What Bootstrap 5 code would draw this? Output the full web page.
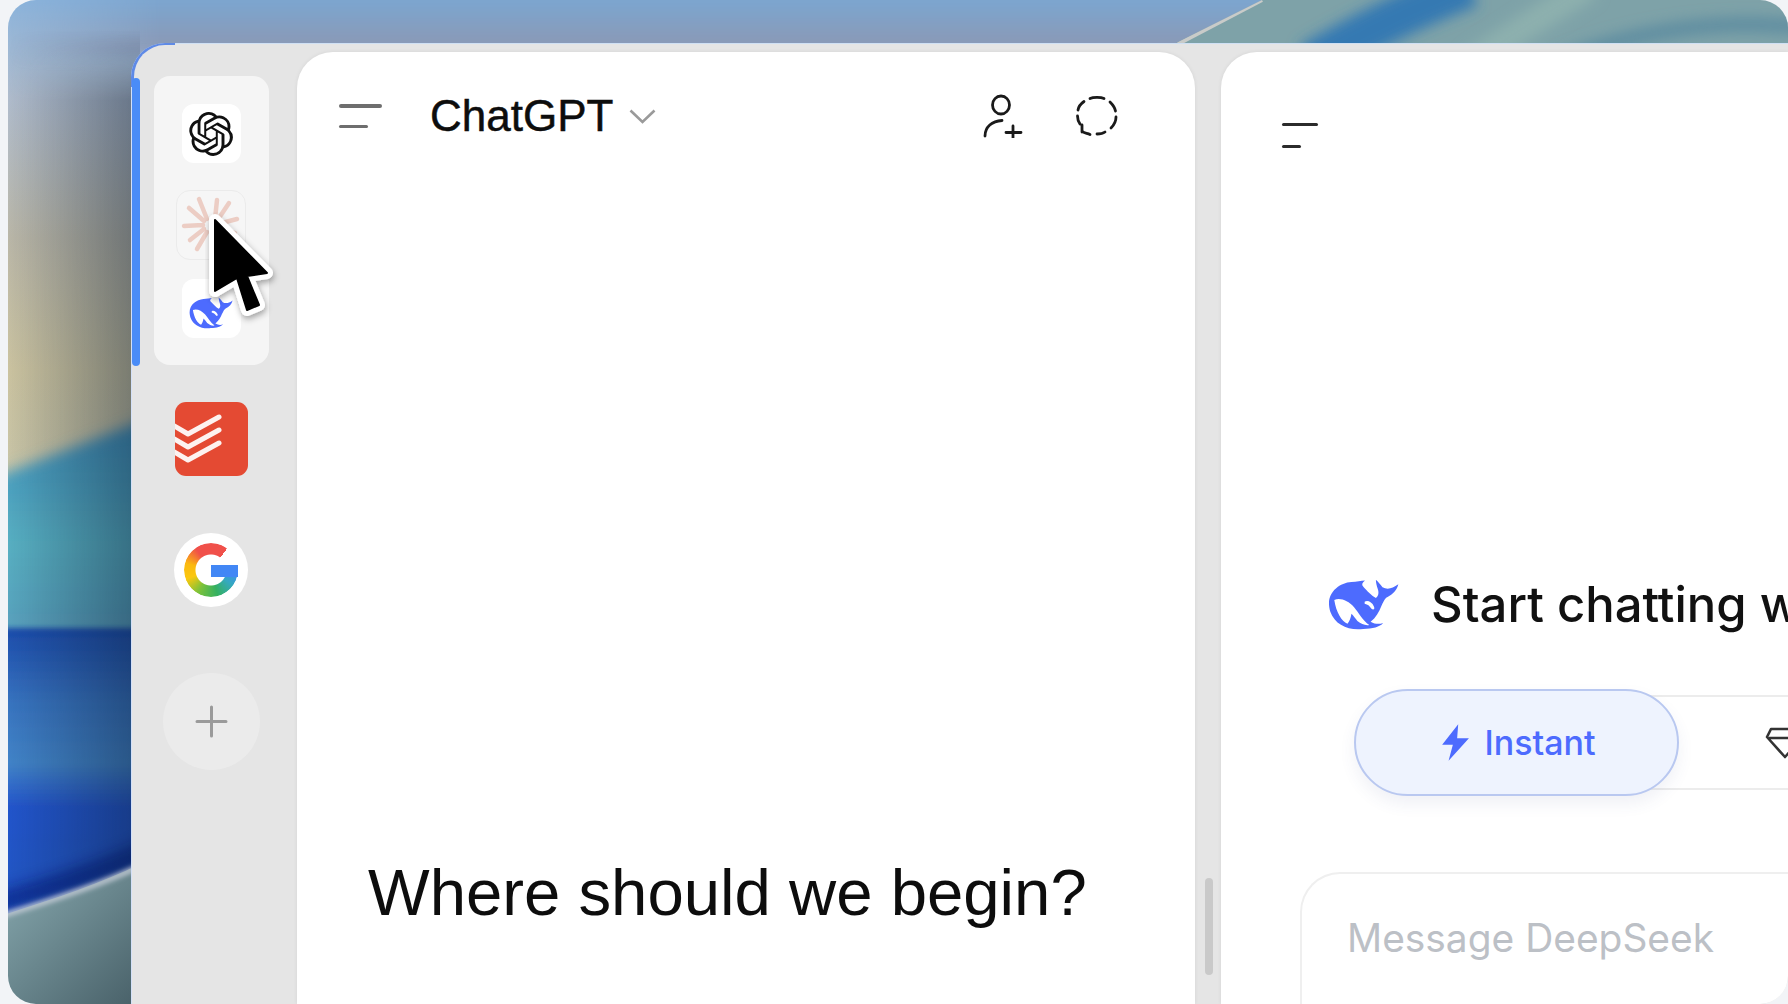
<!DOCTYPE html>
<html lang="en">
<head>
  <meta charset="UTF-8" />
  <meta name="viewport" content="width=device-width, initial-scale=1.0"/>
  <title>AI Sidebar</title>
  <link href="https://cdn.jsdelivr.net/npm/bootstrap@5.3.0/dist/css/bootstrap.min.css" rel="stylesheet">
  <style>
    html, body { height: 100%; margin: 0; overflow: hidden; background: #f2f4f7; }
    .desk { margin-left: 8px; height: 1004px; border-radius: 28px; overflow: hidden; padding: 43px 0 0 123px; }
    .wallpaper { left: 0; top: 0; width: 1780px; height: 1004px; }
    .app-win { height: 961px; background: #e5e5e5; border-top-left-radius: 34px; border-left: 1px solid #d3e0f8; border-top: 1px solid #cfe0f4; z-index: 1; }
    .corner-tint { left: -1px; top: -1px; width: 44px; height: 44px; border-top-left-radius: 34px; border-left: 3px solid #5f8ae6; border-top: 2px solid #5f8ae6; }
    .active-bar { left: 0; top: 34px; width: 8px; height: 288px; background: #4a8cf7; border-radius: 4px; }
    .rail { width: 165px; padding: 32px 7px 0 0; }
    .app-group { width: 115px; height: 289px; background: #f5f5f5; border-radius: 16px; padding-top: 28px; }
    .tile { width: 59px; height: 59px; background: #fff; border-radius: 12px; }
    .tile-claude { width: 70px; height: 70px; margin: 27px 0 19px; background: #f6f6f6; border: 1px solid #ebebeb; border-radius: 14px; }
    .tile-todo { width: 73px; height: 74px; margin-top: 37px; background: #e44a33; border-radius: 11px; overflow: hidden; }
    .tile-google { width: 74px; height: 74px; margin-top: 57px; background: #fff; }
    .g-wrap { width: 54px; height: 54px; }
    .g-ring { width: 54px; height: 54px; border-radius: 50%;
      background: conic-gradient(#f0504a 0deg, #f0504a 37deg, transparent 37deg, transparent 90deg, #4287f5 90deg, #35a9c0 125deg, #34b060 165deg, #7cc23a 210deg, #fbc80f 250deg, #fbb90f 285deg, #f0504a 325deg, #f0504a 360deg);
      -webkit-mask: radial-gradient(circle, transparent 15px, #000 16px);
      mask: radial-gradient(circle, transparent 15px, #000 16px); }
    .g-bar { left: 27px; top: 22px; width: 27px; height: 12px; background: #4287f5; }
    .add-btn { width: 97px; height: 97px; margin-top: 66px; background: #ebebeb; }
    .chat-pane { background: #fff; margin-top: 8px; box-shadow: 0 0 4px rgba(0, 0, 0, .07); overflow: hidden; }
    .pane-gpt { width: 898px; border-radius: 36px 36px 0 0; margin-right: 26px; padding: 39px 76px 0 42px; }
    .pane-ds { min-width: 0; flex: 1; border-top-left-radius: 36px; padding: 71px 0 0 61px; }
    .burger { display: flex; flex-direction: column; justify-content: space-between; }
    .burger i { display: block; border-radius: 2px; }
    .burger-gpt { width: 43px; height: 24px; }
    .burger-gpt i { height: 3.5px; background: #6e6e6e; width: 100%; }
    .burger-gpt i + i { width: 29px; }
    .burger-ds { width: 36px; height: 25px; }
    .burger-ds i { height: 3px; background: #2b2b2b; width: 100%; }
    .burger-ds i + i { width: 19px; }
    .model-name { font: 500 44px/50px "Liberation Sans", sans-serif; color: #0d0d0d; margin-left: 48px; -webkit-text-stroke: .5px #0d0d0d; }
    .greet { font: 400 65.3px/74px "Liberation Sans", sans-serif; color: #0d0d0d; margin: 0 0 74px 29px; white-space: nowrap; }
    .ds-title { font: 500 49px/56px Inter, sans-serif; color: #111; white-space: nowrap; margin-left: 32px; }
    .ds-head { margin: 429px 0 0 46px; }
    .mode-row { margin: 56px 0 0 72px; height: 107px; }
    .mode-on { width: 325px; height: 107px; background: #eef3fe; border: 2px solid #b9c8f0; border-radius: 54px; box-shadow: 0 8px 16px rgba(60, 80, 140, .08); color: #4d6bfe; font: 500 34px/1 Inter, sans-serif; gap: 14px; padding-left: 3px; flex: none; z-index: 1; }
    .mode-off { height: 95px; width: 400px; margin-left: -60px; padding-left: 146px; border-top: 2px solid #ececec; border-bottom: 2px solid #ececec; flex: none; }
    .composer { height: 200px; margin: 76px 0 0 18px; border: 2px solid #efefef; border-right: 0; border-radius: 40px 0 0 0; padding: 41px 0 0 45px; font: 400 38.9px/46px Inter, sans-serif; color: #bcc0c6; white-space: nowrap; }
    .gap-grip { left: 1073px; top: 834px; width: 8px; height: 97px; background: #c9c9c9; border-radius: 4px; z-index: 2; }
    .cursor-art { left: 73px; top: 168px; z-index: 5; }
  </style>
</head>
<body>
  <div class="desk position-relative">
    <!-- wallpaper -->
    <svg class="wallpaper position-absolute" viewBox="8 0 1780 1004" aria-hidden="true">
      <defs>
        <linearGradient id="skyFade" gradientUnits="userSpaceOnUse" x1="0" y1="0" x2="0" y2="660">
          <stop offset="0" stop-color="#8cb4dc"/>
          <stop offset=".15" stop-color="#b0bccc"/>
          <stop offset=".36" stop-color="#bab7a8"/>
          <stop offset=".56" stop-color="#cbc3a0"/>
          <stop offset="1" stop-color="#c4c8b4"/>
        </linearGradient>
        <linearGradient id="tealFade" x1="0" y1="0" x2="0" y2="1">
          <stop offset="0" stop-color="#3f8fbc"/>
          <stop offset=".55" stop-color="#58b0c2"/>
          <stop offset="1" stop-color="#5a9dbc"/>
        </linearGradient>
        <linearGradient id="deepFade" x1="0" y1="0" x2="0" y2="1">
          <stop offset="0" stop-color="#1c4cac"/>
          <stop offset=".25" stop-color="#3874c0"/>
          <stop offset=".45" stop-color="#4284c8"/>
          <stop offset=".6" stop-color="#2354cc"/>
          <stop offset=".85" stop-color="#2457c4"/>
          <stop offset="1" stop-color="#2d62cc"/>
        </linearGradient>
        <linearGradient id="shade" gradientUnits="userSpaceOnUse" x1="8" y1="0" x2="131" y2="0">
          <stop offset="0" stop-color="#0a1a30" stop-opacity="0"/>
          <stop offset="1" stop-color="#0a1a30" stop-opacity=".42"/>
        </linearGradient>
        <linearGradient id="shadeFadeIn" gradientUnits="userSpaceOnUse" x1="0" y1="30" x2="0" y2="100">
          <stop offset="0" stop-color="#000"/>
          <stop offset="1" stop-color="#fff"/>
        </linearGradient>
        <linearGradient id="bandFadeIn" gradientUnits="userSpaceOnUse" x1="10" y1="0" x2="160" y2="0">
          <stop offset="0" stop-color="#000"/>
          <stop offset="1" stop-color="#fff"/>
        </linearGradient>
        <mask id="shadeMask" maskUnits="userSpaceOnUse" x="0" y="0" width="200" height="1004"><rect x="0" y="0" width="200" height="1004" fill="url(#shadeFadeIn)"/></mask>
        <mask id="bandMask" maskUnits="userSpaceOnUse" x="0" y="0" width="1400" height="100"><rect x="0" y="0" width="1400" height="100" fill="url(#bandFadeIn)"/></mask>
        <linearGradient id="shoreFade" x1="0" y1="0" x2="1" y2="1">
          <stop offset="0" stop-color="#8aacb2"/>
          <stop offset="1" stop-color="#486068"/>
        </linearGradient>
        <linearGradient id="topBand" gradientUnits="userSpaceOnUse" x1="0" y1="0" x2="0" y2="44">
          <stop offset="0" stop-color="#7ba6d0"/>
          <stop offset="1" stop-color="#8a99b6"/>
        </linearGradient>
        <filter id="soft" filterUnits="userSpaceOnUse" x="-50" y="-50" width="1900" height="1100"><feGaussianBlur stdDeviation="7"/></filter>
        <filter id="edge" filterUnits="userSpaceOnUse" x="-50" y="-50" width="1900" height="1100"><feGaussianBlur stdDeviation="2.5"/></filter>
        <clipPath id="deepClip"><path d="M0 625H140V864C100 884 50 900 0 916Z"/></clipPath>
        <clipPath id="tipClip"><path d="M1174 44L1262 0H1788V44Z"/></clipPath>
        <path id="whale" fill="#4d6bfe" fill-rule="evenodd" d="M28 115C28 78 62 52 96 50C112 49 125 46 137 45C128 52 126 58 132 64C142 75 158 92 170 98C177 94 180 84 176 72C172 60 170 50 170 43C178 50 184 58 190 66C205 74 220 70 238 57C234 74 222 88 204 96C196 100 192 112 186 124C180 140 170 158 154 170C168 178 180 178 192 174C182 186 160 192 132 192C88 198 46 180 32 140C29 130 28 122 28 115ZM44 104C62 96 86 106 104 126C116 140 130 166 150 180C138 182 126 178 114 168C108 160 102 152 96 146C94 158 90 170 84 176C66 168 50 142 44 104ZM136 110C144 104 158 110 164 124C168 132 162 136 156 130C150 122 146 118 136 116Z"/>
      </defs>
      <rect x="0" y="0" width="1300" height="660" fill="url(#skyFade)"/>
      <g mask="url(#bandMask)"><rect x="-20" y="-20" width="1320" height="76" fill="url(#topBand)" filter="url(#soft)"/></g>
      <polygon points="-20,483 160,414 160,650 -20,650" fill="url(#tealFade)" filter="url(#soft)"/>
      <rect x="-20" y="628" width="170" height="300" fill="url(#deepFade)" filter="url(#edge)"/>
      <g clip-path="url(#deepClip)">
        <path d="M170 840C120 865 50 890 -10 905" stroke="#00187a" stroke-width="22" fill="none" opacity=".6" filter="url(#soft)"/>
      </g>
      <g mask="url(#shadeMask)"><rect x="0" y="0" width="140" height="930" fill="url(#shade)"/></g>
      <path d="M140 864C100 884 50 900 0 916V1004H140Z" fill="url(#shoreFade)"/>
      <path d="M140 866C100 885 50 901 0 916" stroke="#c3cad6" stroke-width="5" fill="none" filter="url(#edge)"/>
      <g clip-path="url(#tipClip)">
        <rect x="1160" y="0" width="640" height="44" fill="#7ea2a8"/>
        <path d="M1470 -14C1420 6 1370 28 1310 64" stroke="#3479b2" stroke-width="42" fill="none" filter="url(#soft)"/>
        <path d="M1590 -14C1560 6 1520 28 1470 64" stroke="#8db0ae" stroke-width="26" fill="none" filter="url(#soft)"/>
        <path d="M1810 28C1720 18 1640 30 1560 60" stroke="#5d8ca0" stroke-width="14" fill="none" filter="url(#soft)"/>
        <path d="M1178 44L1262 0" stroke="#c9cbc9" stroke-width="4" fill="none"/>
      </g>
    </svg>

    <div class="app-win position-relative d-flex">
      <span class="corner-tint position-absolute"></span>
      <span class="active-bar position-absolute"></span>

      <!-- app rail -->
      <div class="rail d-flex flex-column align-items-center flex-shrink-0">
        <div class="app-group d-flex flex-column align-items-center">
          <div class="tile d-flex align-items-center justify-content-center">
            <svg width="44" height="44" viewBox="0 0 24 24" fill="#111"><path d="M22.2819 9.8211a5.9847 5.9847 0 0 0-.5157-4.9108 6.0462 6.0462 0 0 0-6.5098-2.9A6.0651 6.0651 0 0 0 4.9807 4.1818a5.9847 5.9847 0 0 0-3.9977 2.9 6.0462 6.0462 0 0 0 .7427 7.0966 5.98 5.98 0 0 0 .511 4.9107 6.051 6.051 0 0 0 6.5146 2.9001A5.9847 5.9847 0 0 0 13.2599 24a6.0557 6.0557 0 0 0 5.7718-4.2058 5.9894 5.9894 0 0 0 3.9977-2.9001 6.0557 6.0557 0 0 0-.7475-7.0729zm-9.022 12.6081a4.4755 4.4755 0 0 1-2.8764-1.0408l.1419-.0804 4.7783-2.7582a.7948.7948 0 0 0 .3927-.6813v-6.7369l2.02 1.1686a.071.071 0 0 1 .038.052v5.5826a4.504 4.504 0 0 1-4.4945 4.4944zm-9.6607-4.1254a4.4708 4.4708 0 0 1-.5346-3.0137l.142.0852 4.783 2.7582a.7712.7712 0 0 0 .7806 0l5.8428-3.3685v2.3324a.0804.0804 0 0 1-.0332.0615L9.74 19.9502a4.4992 4.4992 0 0 1-6.1408-1.6464zM2.3408 7.8956a4.485 4.485 0 0 1 2.3655-1.9728V11.6a.7664.7664 0 0 0 .3879.6765l5.8144 3.3543-2.0201 1.1685a.0757.0757 0 0 1-.071 0l-4.8303-2.7865A4.504 4.504 0 0 1 2.3408 7.872zm16.5963 3.8558L13.1038 8.364 15.1192 7.2a.0757.0757 0 0 1 .071 0l4.8303 2.7913a4.4944 4.4944 0 0 1-.6765 8.1042v-5.6772a.79.79 0 0 0-.407-.667zm2.0107-3.0231l-.142-.0852-4.7735-2.7818a.7759.7759 0 0 0-.7854 0L9.409 9.2297V6.8974a.0662.0662 0 0 1 .0284-.0615l4.8303-2.7866a4.4992 4.4992 0 0 1 6.6802 4.66zM8.3065 12.863l-2.02-1.1638a.0804.0804 0 0 1-.038-.0567V6.0742a4.4992 4.4992 0 0 1 7.3757-3.4537l-.142.0805L8.704 5.459a.7948.7948 0 0 0-.3927.6813zm1.0976-2.3654l2.602-1.4998 2.6069 1.4998v2.9994l-2.5974 1.4997-2.6067-1.4997Z"/></svg>
          </div>
          <div class="tile-claude d-flex align-items-center justify-content-center">
            <svg width="60" height="60" viewBox="-30 -30 60 60" stroke="#eccdc4" stroke-width="4.5" stroke-linecap="round">
              <path d="M-4 -6L-12 -26M4 -6L6 -25M6 -4L18 -22M7 -1L26 -6M7 2L24 8M-7 -4L-22 -17M-8 0L-27 1M-7 4L-21 15M-4 7L-14 24M2 7L4 24"/>
            </svg>
          </div>
          <div class="tile d-flex align-items-end justify-content-center pb-2">
            <svg width="44" height="33" viewBox="25 42 215 158"><use href="#whale"/></svg>
          </div>
        </div>
        <div class="tile-todo d-flex align-items-center">
          <svg width="73" height="74" viewBox="0 0 73 74" fill="none" stroke="#fff" stroke-width="5" stroke-linecap="round" stroke-linejoin="round" opacity=".93">
            <path d="M-4 22L13 32L44 15M-4 35L13 45L44 28M-4 48L13 58L44 41"/>
          </svg>
        </div>
        <div class="tile-google rounded-circle d-flex align-items-center justify-content-center">
          <div class="g-wrap position-relative">
            <div class="g-ring"></div>
            <div class="g-bar position-absolute"></div>
          </div>
        </div>
        <div class="add-btn rounded-circle d-flex align-items-center justify-content-center">
          <svg width="33" height="33" viewBox="0 0 33 33" stroke="#9a9a9a" stroke-width="3" stroke-linecap="round"><path d="M16.5 2V31M2 16.5H31"/></svg>
        </div>
      </div>

      <!-- ChatGPT pane -->
      <div class="chat-pane pane-gpt d-flex flex-column flex-shrink-0">
        <div class="d-flex align-items-center">
          <div class="burger burger-gpt"><i></i><i></i></div>
          <span class="model-name">ChatGPT</span>
          <svg class="ms-3" width="27" height="15" viewBox="0 0 27 15" fill="none" stroke="#9a9a9a" stroke-width="2.6"><path d="M1.5 1.5L13.5 13L25.5 1.5"/></svg>
          <div class="ms-auto d-flex align-items-center gap-5">
            <svg width="40" height="44" viewBox="0 0 40 44" fill="none" stroke="#1a1a1a" stroke-width="2.8" stroke-linecap="round">
              <ellipse cx="18" cy="11" rx="8.5" ry="9"/>
              <path d="M2 42C2 33 9 27 19 26.5M30 32V46M23 38.5H38" />
            </svg>
            <svg class="ms-1" width="44" height="42" viewBox="0 0 44 42" fill="none" stroke="#1a1a1a" stroke-width="2.8" stroke-linecap="round">
              <path d="M15 3.5C18 2 26 2 29 3.5M35 7C38 10 40 13 40.5 16M41 22C41 26 39 30 36 33M30 37C28 38.5 25 39 22 39M7 36C9 38.5 12 38 15 39.5M7 30V37M5 29C3 26 2.5 23 2.5 21M3 15C3.5 12 5.5 9 9 6.5"/>
            </svg>
          </div>
        </div>
        <div class="greet mt-auto">Where should we begin?</div>
      </div>

      <span class="gap-grip position-absolute"></span>

      <!-- DeepSeek pane -->
      <div class="chat-pane pane-ds">
        <div class="burger burger-ds"><i></i><i></i></div>
        <div class="ds-head d-flex align-items-center">
          <svg class="flex-shrink-0" width="71" height="55" viewBox="25 42 215 158"><use href="#whale"/></svg>
          <span class="ds-title">Start chatting w</span>
        </div>
        <div class="mode-row d-flex align-items-center">
          <div class="mode-on position-relative d-flex align-items-center justify-content-center">
            <svg width="30" height="37" viewBox="0 0 28 34" fill="#4d6bfe"><path d="M17 0L2 19H12L8 34L27 13H16Z"/></svg>
            <span>Instant</span>
          </div>
          <div class="mode-off d-flex align-items-center">
            <svg width="40" height="32" viewBox="0 0 40 32" fill="none" stroke="#333" stroke-width="2.6" stroke-linejoin="round"><path d="M6 2H34L38 10L20 30L2 10ZM4 11H36"/></svg>
          </div>
        </div>
        <div class="composer">Message DeepSeek</div>
      </div>

      <svg class="cursor-art position-absolute" width="90" height="130" viewBox="0 0 90 130">
        <defs><filter id="curShadow" x="-30%" y="-30%" width="160%" height="160%"><feDropShadow dx="1" dy="3" stdDeviation="3" flood-opacity=".35"/></filter></defs>
        <g stroke-linejoin="round">
          <path filter="url(#curShadow)" fill="#fff" stroke="#fff" stroke-width="12" d="M10 8V79L32 66L42 98L54 93L42 64L62 61Z"/>
          <path fill="#000" stroke="#000" stroke-width="2" d="M10 8V79L32 66L42 98L54 93L42 64L62 61Z"/>
        </g>
      </svg>
    </div>
  </div>
  <script src="https://cdn.jsdelivr.net/npm/bootstrap@5.3.0/dist/js/bootstrap.bundle.min.js"></script>
</body>
</html>
